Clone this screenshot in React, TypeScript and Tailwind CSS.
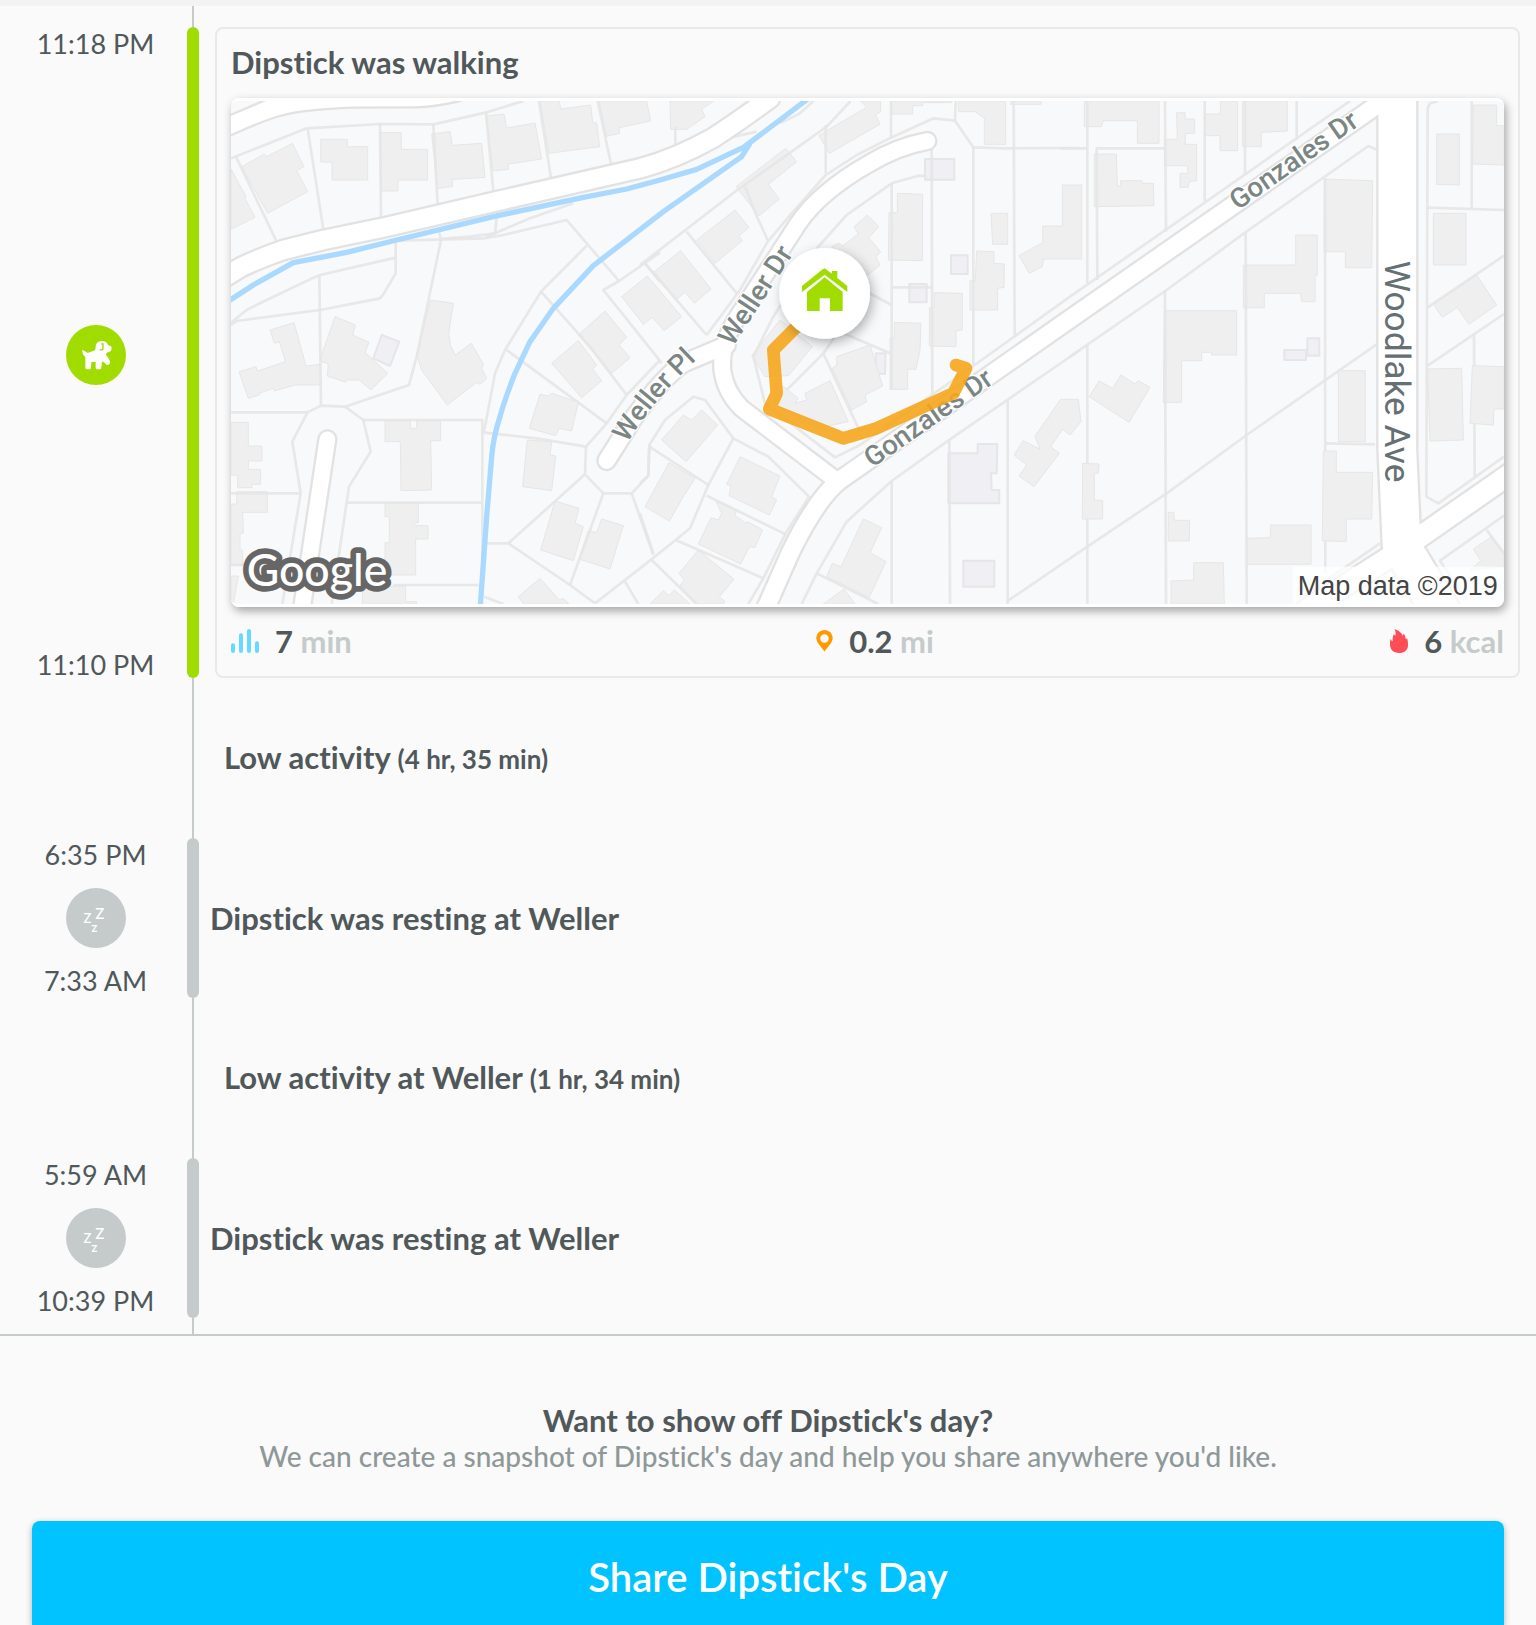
import type { ReactNode } from "react";

/* ---------- map data: [x, y] pairs, grouped by tile ---------- */

type Tile = { x: number; y: number; lots: string[]; houses: string[]; pools: string[] };

const tiles: Tile[] = [
  {
    x: 0,
    y: 0,
    lots: [
      "33,205 260,115 480,102 640,103 800,67 910,33",
      "48,200 170,455",
      "263,115 310,418",
      "480,102 483,383",
      "640,103 653,345",
      "798,67 820,303",
      "957,33 993,265",
      "1133,33 1173,222",
      "33,698 80,660 140,630 270,568 300,555 527,503",
      "527,455 527,550 490,613 480,625 300,660 50,693 33,705",
      "298,555 303,945",
      "530,452 790,445 850,435 1040,390 1197,573 1320,488",
      "660,447 750,440 825,430 830,385",
      "800,440 930,385 1060,340",
      "656,420 663,450 590,800 567,885 375,950 303,947 262,967 33,967",
      "1100,467 963,605 855,780 825,850 797,1000 790,1030",
      "963,605 1110,770 1220,915",
      "1275,520 1320,575",
      "1197,573 1150,600 1310,800 1325,820",
      "860,780 1160,1000",
    ],
    houses: [
      "65,230 133,192 140,200 217,160 252,230 230,242 263,305 143,370",
      "33,237 77,318 75,325 105,382 33,418",
      "302,148 382,148 382,170 443,170 443,270 336,270 336,216 302,216",
      "481,128 544,128 544,178 623,178 623,270 534,270 534,303 483,303",
      "635,132 690,125 697,166 785,160 795,262 697,268 697,290 652,295",
      "797,78 852,72 860,114 945,99 965,207 865,222 866,238 820,243",
      "960,33 1018,33 1022,57 1112,45 1118,97 1130,99 1139,170 987,190",
      "1137,33 1280,33 1292,93 1197,113 1199,130 1160,139",
      "150,720 222,698 258,828 300,823 300,885 225,885 163,903 160,895 117,910 118,915 85,925 57,845 108,830 112,843 197,815 178,755 163,760",
      "345,680 406,705 398,735 447,757 435,787 503,850 453,900 418,870 378,870 378,877 322,858 325,822 305,815 303,800",
      "632,630 700,640 686,730 692,768 706,795 754,760 790,823 785,835 800,865 780,883 770,877 682,945 605,840 590,795",
      "1155,663 1220,742 1197,765 1230,803 1175,850 1075,735",
      "995,820 1075,752 1130,825 1118,838 1145,872 1085,923",
    ],
    pools: ["485,735 538,755 510,828 460,805"],
  },
  {
    x: 1260,
    y: 0,
    lots: [
      "0,525 288,303 560,110 632,33",
      "140,425 290,610",
      "15,520 200,735",
      "557,105 557,250",
      "315,290 350,378 383,450",
      "753,33 753,143 880,85 945,92 1000,172 1100,175 1320,174",
      "947,33 945,92",
      "875,180 877,915",
      "1000,172 1000,825",
      "1121,33 1124,740",
      "200,735 300,600 383,455 455,370 557,255 650,195 753,143",
      "855,258 835,257 755,280 620,375 535,470 400,680 340,800 375,940 585,1102 660,1065 875,915 1000,828 1290,620",
      "755,280 755,900",
      "755,592 877,592",
      "670,600 755,645",
      "600,725 750,790",
      "585,740 550,790 430,910",
      "550,790 660,1025",
      "106,110 106,172",
      "390,105 430,95 480,70 520,33",
      "260,145 350,125",
    ],
    houses: [
      "-55,620 22,558 125,680 72,722 37,682 10,703",
      "43,545 122,482 213,597 163,640 135,607 110,628",
      "90,33 220,33 185,58 195,80 140,118 92,118",
      "288,290 437,175 470,215 385,283 418,327 357,378",
      "170,450 285,360 327,412 297,437 307,452 225,520",
      "537,137 560,122 680,52 662,33 722,33 722,65 707,75 720,103 568,190",
      "753,33 935,33 935,38 848,38 848,47 818,47 818,72 753,72",
      "955,33 1097,33 1097,163 1033,163 1033,85 1005,65 955,65",
      "1112,33 1203,33 1203,43 1112,43",
      "772,310 848,313 847,512 745,510 747,368 772,368",
      "642,410 682,375 716,410 686,443 722,485 708,502 720,525 680,558 600,500 575,470 597,460 607,468 655,432",
      "1053,370 1103,370 1103,463 1058,463",
      "1010,483 1062,485 1062,520 1093,522 1092,592 1073,595 1073,660 990,660 990,572 1006,572",
      "883,608 967,610 967,720 948,722 948,770 868,768 868,653 883,653",
      "763,697 843,700 840,780 828,838 803,838 803,898 750,898 750,745 763,745",
      "1267,285 1325,285 1325,507 1210,507 1207,530 1168,550 1137,497 1208,458 1208,408 1267,408",
      "335,797 420,690 517,770 445,857 375,860",
    ],
    pools: [
      "855,207 943,207 943,269 855,269",
      "933,496 983,496 983,552 933,552",
      "808,582 860,582 860,637 808,637",
      "707,790 737,790 735,852 707,850",
    ],
  },
  {
    x: 2550,
    y: 0,
    lots: [
      "0,620 840,33",
      "0,800 290,600 525,428 895,168 922,180",
      "52,33 52,580",
      "52,765 52,1542",
      "82,570 80,175 283,175",
      "-30,175 52,175",
      "285,33 288,425",
      "285,600 288,1542",
      "404,33 404,335",
      "525,33 525,255",
      "527,428 530,1542",
      "680,33 680,150",
      "765,265 766,1450",
      "1205,33 1205,355",
      "1073,353 1302,360",
      "1105,33 1080,40 1073,55 1069,1220 1105,1240 1302,1100",
      "1073,652 1302,497",
      "1073,827 1302,672",
      "1212,735 1214,1160",
    ],
    houses: [
      "43,33 267,33 267,160 202,160 202,92 100,92 95,110 43,110",
      "73,192 139,192 142,288 152,288 152,272 215,272 217,280 250,280 252,347 73,350",
      "320,68 345,68 345,87 374,87 374,130 346,130 346,163 380,163 380,272 357,275 355,292 330,292 330,250 354,250 352,227 283,227 283,148 322,148",
      "452,33 503,33 503,182 450,182 450,137 405,137 405,72 450,72",
      "517,33 652,33 652,123 574,127 574,170 517,170",
      "763,267 908,272 905,533 826,533 826,485 762,485",
      "1100,132 1168,132 1168,285 1100,283",
      "1210,45 1280,45 1280,107 1302,107 1302,225 1208,222",
      "1090,370 1188,370 1188,525 1090,525",
      "1090,642 1220,555 1280,645 1197,703 1162,652 1117,682",
      "677,435 742,435 742,555 735,558 735,635 695,635 692,610 583,610 583,653 520,653 520,525 677,525",
      "283,662 500,662 500,795 425,795 425,787 395,787 395,812 335,812 335,937 280,937",
    ],
    pools: ["712,745 748,745 748,797 712,797", "643,780 708,780 708,810 643,810"],
  },
  {
    x: 0,
    y: 780,
    lots: [
      "793,248 950,265 1098,290 1160,220 1220,135 1320,30",
      "1098,290 1095,373 1150,430 1235,430 1285,377 1288,285",
      "1095,373 865,580 800,580",
      "865,580 1050,705 1125,760 1260,655",
      "1150,430 1050,705",
      "1235,430 1300,615",
      "1215,695 1255,762",
      "793,740 850,762",
      "262,188 217,275 242,430 187,762",
      "33,430 242,430",
      "375,170 430,210 452,305 387,410 335,762",
      "430,210 787,210 787,700",
      "383,458 783,458",
      "520,705 775,705",
      "33,645 90,645",
    ],
    houses: [
      "33,217 85,217 85,288 126,288 126,333 85,333 85,358 122,358 122,403 96,403 96,413 53,413 53,375 33,375",
      "50,425 142,425 142,487 68,487 70,550 60,550 60,600 68,602 68,645 33,645 33,462 50,462",
      "33,678 55,678 40,762 33,762",
      "495,212 572,212 572,235 590,235 590,212 662,212 662,272 632,272 635,420 543,422 541,275 495,275",
      "495,460 595,460 595,517 583,520 583,527 624,527 624,567 587,567 587,675 495,675 495,578 508,578 508,500 495,500",
      "427,708 557,708 557,755 590,755 590,762 427,762",
      "960,133 985,138 995,130 1075,157 1055,243 1017,235 1007,257 928,235",
      "922,270 995,275 990,315 1007,318 995,422 908,410",
      "1005,453 1077,475 1065,520 1090,530 1060,632 962,600",
      "1145,507 1210,527 1170,657 1077,627 1105,542 1130,548",
      "895,740 960,685 1018,750 1030,745 1048,762 910,762",
    ],
    pools: [],
  },
  {
    x: 1260,
    y: 780,
    lots: [
      "0,400 25,377 28,285 75,210 160,140 195,150 280,265 385,320 507,440 437,550 370,685 325,762",
      "0,655 107,570 150,535 205,405 280,265",
      "28,290 205,405",
      "200,437 437,553",
      "107,570 370,685",
      "0,490 40,610",
      "35,630 170,762",
      "485,762 530,670 620,515 755,393 930,268 1320,0",
      "755,393 755,762",
      "530,670 715,762",
      "928,268 930,762",
      "1103,150 1103,762",
      "1100,755 1320,605 1580,430 1820,255 2210,-17",
    ],
    houses: [
      "590,20 690,-15 728,108 675,135 680,155 635,180 577,55 590,45",
      "430,110 475,145 465,160 500,150 495,130 570,92 625,215 530,235 400,160",
      "65,270 130,195 155,210 185,180 233,225 138,335",
      "87,338 165,385 133,435 88,513 15,470",
      "300,320 420,378 395,440 410,450 388,495 267,437 273,407 260,403",
      "228,455 290,480 285,497 318,520 323,515 368,540 345,592 328,590 302,642 175,582 213,503 235,510 245,490",
      "175,600 282,688 238,740 255,755 250,762 165,762 120,705 133,690 117,670",
      "30,762 70,722 87,737 103,720 150,762",
      "670,507 725,533 690,608 738,635 687,743 560,680 577,640 603,650",
      "550,762 612,717 645,762",
      "1262,148 1315,148 1323,215 1290,255 1268,238 1232,290 1258,310 1182,410 1137,378 1160,345 1122,315 1150,272 1200,298 1185,258",
    ],
    pools: [
      "925,310 1013,310 1013,282 1072,282 1070,370 1053,370 1055,420 1078,420 1078,460 925,460",
      "970,632 1063,632 1063,710 970,710",
    ],
  },
  {
    x: 2550,
    y: 780,
    lots: [
      "766,280 915,283",
      "1302,497 1110,632 1190,750",
      "1250,540 1302,610",
      "690,745 930,580",
    ],
    houses: [
      "58,140 87,93 128,115 153,75 195,102 205,92 240,112 177,217",
      "38,340 87,342 85,370 73,370 73,450 98,452 98,507 37,507",
      "805,62 886,62 886,275 805,275",
      "760,303 799,303 799,367 908,367 905,507 829,507 829,575 757,572",
      "601,525 723,525 723,643 532,643 532,565 601,563",
      "295,487 311,487 313,511 359,511 358,573 295,573",
      "371,638 460,638 463,762 303,762 303,693 371,690",
      "1073,57 1175,55 1180,270 1080,273",
      "1207,47 1302,50 1302,177 1272,177 1270,225 1200,220",
      "1210,597 1265,560 1302,615 1302,650 1200,660 1232,632",
    ],
    pools: [],
  },
];

type Road = { d: string; w: number };

const roads: Road[] = [
  { d: "M20 558 L60 533 Q110 508 190 480 L310 450 L480 415 L820 336 L1260 235 Q1370 205 1480 143 Q1550 98 1650 25", w: 60 },
  { d: "M2122 153 Q2030 170 1945 222 Q1800 305 1735 400 Q1680 485 1560 670 Q1500 760 1507 840 Q1515 905 1565 955 L1850 1172", w: 52 },
  { d: "M1160 1112 L1240 985 Q1330 860 1390 820 L1520 765", w: 54 },
  { d: "M3510 18 L2550 687 L1860 1170 Q1790 1225 1710 1390 L1635 1560", w: 56 },
  { d: "M3532 20 V1080 L3545 1370 L3660 1560", w: 118 },
  { d: "M3870 1152 L3550 1375 L3260 1560", w: 66 },
  { d: "M322 1048 L245 1560", w: 52 },
];

const routePath =
  "M1800 630 L1725 715 L1660 780 L1670 910 L1648 957 L1870 1045 L1970 1015 L2200 910 L2238 835 L2208 825";

const streetName = "font-['Roboto',sans-serif] text-[83px] font-medium";

function WalkMap() {
  return (
    <svg
      viewBox="33 33 3819 1509"
      preserveAspectRatio="xMidYMid slice"
      className="block w-full"
      role="img"
      aria-label="Map of the walk near Weller Dr and Gonzales Dr"
    >
      <defs>
        <filter id="pin-shadow" x="-30%" y="-30%" width="160%" height="160%">
          <feDropShadow dx="8" dy="12" stdDeviation="18" floodColor="#000" floodOpacity="0.3" />
        </filter>
        <path id="weller-pl" d="M1222 1060 Q1295 935 1440 800" />
      </defs>
      <rect x="33" y="33" width="3819" height="1509" fill="#f8f9fb" />

      {tiles.map((t) => (
        <g key={`${t.x}-${t.y}`} transform={`translate(${t.x} ${t.y})`} strokeLinejoin="round">
          {t.houses.map((p) => (
            <polygon key={p} points={p} fill="#efefef" stroke="#e6e6e6" strokeWidth="3" />
          ))}
          {t.pools.map((p) => (
            <polygon key={p} points={p} fill="#efeff4" stroke="#e6e6e8" strokeWidth="6" />
          ))}
          {t.lots.map((p) => (
            <polyline key={p} points={p} fill="none" stroke="#e5e5e5" strokeOpacity="0.9" strokeWidth="8" />
          ))}
        </g>
      ))}

      <path
        d="M20 80 L90 50 L160 20 H760 L720 33 Q640 52 585 52 L400 53 Q250 58 180 78 Q120 95 20 142 Z"
        fill="#fff"
        stroke="#e2e2e2"
        strokeWidth="7"
      />

      <g fill="none" strokeLinecap="round" strokeLinejoin="round">
        {roads.map((r) => (
          <path key={r.d} d={r.d} stroke="#e2e2e2" strokeWidth={r.w + 9} />
        ))}
        {roads.map((r) => (
          <path key={r.d} d={r.d} stroke="#fff" strokeWidth={r.w - 5} />
        ))}
      </g>

      <g fill="none" stroke="#a9d9ff" strokeWidth="16" strokeLinejoin="round">
        <path d="M20 637 L100 585 L220 518 L380 487 L530 450 L820 380 L1090 322 L1220 297 L1320 270 L1430 238 L1570 172 L1600 150 L1770 22" />
        <path d="M1590 160 L1565 200 L1330 365 L1120 527 L1000 655 L930 755 L885 850 Q850 940 840 980 Q820 1040 815 1100 L800 1280 L790 1420 L780 1560" />
      </g>

      <g fill="#7b8684" stroke="#fff" strokeWidth="8" strokeLinejoin="round" paintOrder="stroke">
        <text transform="translate(1538 772) rotate(-57)" className={streetName}>
          Weller Dr
        </text>
        <text className={streetName}>
          <textPath href="#weller-pl">Weller Pl</textPath>
        </text>
        <text transform="translate(3053 362) rotate(-35)" className={streetName}>
          Gonzales Dr
        </text>
        <text transform="translate(1957 1135) rotate(-35)" className={streetName}>
          Gonzales Dr
        </text>
        <text
          transform="translate(3495 512) rotate(90)"
          fill="#647073"
          className="font-['Roboto',sans-serif] text-[106px]"
        >
          Woodlake Ave
        </text>
      </g>

      <path
        d={routePath}
        fill="none"
        stroke="#f5a61c"
        strokeOpacity="0.9"
        strokeWidth="38"
        strokeLinecap="round"
        strokeLinejoin="round"
      />

      <circle cx="1814" cy="610" r="136" fill="#fff" filter="url(#pin-shadow)" />
      <g fill="#a0dc00">
        <path d="M1746 588 L1808 538 L1814 535 L1836 551 V543 H1852 V564 L1882 588 V606 L1814 554 L1746 606 Z" />
        <path d="M1761 606 L1814 562 L1868 606 V663 H1830 V625 H1799 V663 H1761 Z" />
      </g>

      <text
        x="80"
        y="1488"
        fill="#fff"
        stroke="#666"
        strokeWidth="34"
        strokeLinejoin="round"
        paintOrder="stroke"
        className="font-['Lato',sans-serif] text-[134px] font-medium"
      >
        Google
      </text>

      <rect x="3218" y="1430" width="634" height="112" fill="#fff" fillOpacity="0.72" />
      <text x="3233" y="1515" fill="#444" className="font-['Liberation_Sans',sans-serif] text-[81px]">
        Map data ©2019
      </text>
    </svg>
  );
}

function DogIcon() {
  return (
    <svg viewBox="48 45 180 180" className="size-15" aria-hidden="true">
      <path
        fill="#fff"
        d="M96 120 Q104 121 113 129 L135 121 Q137 117 137 108 Q139 94 154 93 Q168 91 174 104 Q176 108 183 108 Q188 115 183 122 Q178 126 170 128 L168 134 Q178 146 180 154 Q181 163 174 165 Q168 166 165 159 L156 154 L154 174 Q154 178 148 178 H142 Q137 178 137 173 V156 H124 L123 173 Q123 178 117 178 H111 Q106 178 106 172 V142 Q96 132 96 120 Z"
      />
      <path fill="none" stroke="#a0dc00" strokeWidth="4" d="M154 102 H159 V116 Q158 121 149 119" />
    </svg>
  );
}

function SleepIcon() {
  return (
    <svg viewBox="198 204 180 180" className="size-15 font-['Inter',sans-serif]" aria-hidden="true" fill="#fff">
      <text x="285" y="297" className="text-[45px] font-medium">Z</text>
      <text x="250" y="310" className="text-[39px] font-medium">Z</text>
      <text x="274" y="336" className="text-[28px] font-bold">Z</text>
    </svg>
  );
}

function BarsIcon() {
  return (
    <svg viewBox="0 0 84 72" className="h-6 w-7" fill="#66d9ff" aria-hidden="true">
      <rect x="0" y="43" width="12" height="29" rx="6" />
      <rect x="24" y="13" width="12" height="59" rx="6" />
      <rect x="48" y="0" width="12" height="72" rx="6" />
      <rect x="72" y="37" width="12" height="35" rx="6" />
    </svg>
  );
}

function PinIcon() {
  return (
    <svg viewBox="0 0 52 72" className="h-6 w-[17px]" aria-hidden="true">
      <path
        fill="#f90"
        fillRule="evenodd"
        d="M26 2 C40 2 51 13 51 27 C51 42 34 56 26 69 C18 56 1 42 1 27 C1 13 12 2 26 2 Z M26 15 A13 13 0 1 0 26 41 A13 13 0 1 0 26 15 Z"
      />
    </svg>
  );
}

function FlameIcon() {
  return (
    <svg viewBox="0 0 54 72" className="h-6 w-[18px]" aria-hidden="true">
      <path
        fill="#ff4d55"
        d="M13 0 C22 3 34 9 38 20 C40 18 41 15 40 13 C46 19 46 26 48 31 C50 30 51 28 51 26 C54 35 54 45 54 50 C53 64 42 72 27 72 C11 72 0 63 0 46 C0 41 0 35 2 30 C4 33 5 36 8 37 C8 28 8 21 12 15 C13 18 14 19 16 20 C18 13 17 6 13 0 Z"
      />
    </svg>
  );
}

function Stat({ icon, value, unit }: { icon: ReactNode; value: string; unit: string }) {
  return (
    <div className="flex items-center">
      {icon}
      <span className="ml-4 text-[31px] leading-9 font-bold">
        {value} <span className="text-[#c5cbcb]">{unit}</span>
      </span>
    </div>
  );
}

type EntryProps = {
  start: string;
  end: string;
  tone: "walk" | "rest";
  children: ReactNode;
};

function Entry({ start, end, tone, children }: EntryProps) {
  const walk = tone === "walk";
  return (
    <li className="flex min-h-40">
      <div className="flex w-[187px] shrink-0 flex-col items-center justify-between pl-1 text-[27px] leading-[34px]">
        <time>{start}</time>
        <span className={walk ? "rounded-full bg-[#a0dc00]" : "rounded-full bg-[#c5cbcb]"}>
          {walk ? <DogIcon /> : <SleepIcon />}
        </span>
        <time className={walk ? "-mb-1" : ""}>{end}</time>
      </div>
      <div className={walk ? "w-3 shrink-0 rounded-full bg-[#a0dc00]" : "w-3 shrink-0 rounded-full bg-[#c5cbcb]"} />
      {children}
    </li>
  );
}

function Spine({ className }: { className: string }) {
  return (
    <div className={`flex ${className}`} aria-hidden="true">
      <div className="ml-48 w-0.5 bg-[#c5cbcb]" />
    </div>
  );
}

function LowActivity({ label, duration }: { label: string; duration: string }) {
  return (
    <li className="flex h-40 items-center">
      <div className="ml-48 w-0.5 self-stretch bg-[#c5cbcb]" />
      <p className="ml-[30px] text-[31px] leading-9 font-bold">
        {label} <span className="text-[26px]">({duration})</span>
      </p>
    </li>
  );
}

function Resting({ place }: { place: string }) {
  return <h2 className="ml-[11px] self-center text-[31px] leading-9 font-bold">Dipstick was resting at {place}</h2>;
}

export default function App() {
  return (
    <main className="min-h-screen overflow-hidden border-t-6 border-[#f3f3f3] bg-[#fafafa] font-['Lato',sans-serif] text-[#50585a] [font-variant-ligatures:none]">
      <section className="border-b-2 border-[#c5cbcb]">
        <Spine className="h-[21px]" />
        <ol>
          <Entry start="11:18 PM" end="11:10 PM" tone="walk">
            <article className="mr-4 ml-4 min-w-0 flex-1 rounded-lg border-2 border-[#e6eaea] px-3.5 pt-[15px] pb-[17px]">
              <h2 className="text-[31px] leading-9 font-bold">Dipstick was walking</h2>
              <div className="mt-[18px] overflow-hidden rounded-lg border-y-3 border-white shadow-[2px_4px_10px_rgba(0,0,0,0.35)]">
                <WalkMap />
              </div>
              <div className="mt-4 flex justify-between">
                <Stat icon={<BarsIcon />} value="7" unit="min" />
                <div className="pl-2">
                  <Stat icon={<PinIcon />} value="0.2" unit="mi" />
                </div>
                <Stat icon={<FlameIcon />} value="6" unit="kcal" />
              </div>
            </article>
          </Entry>
          <LowActivity label="Low activity" duration="4 hr, 35 min" />
          <Entry start="6:35 PM" end="7:33 AM" tone="rest">
            <Resting place="Weller" />
          </Entry>
          <LowActivity label="Low activity at Weller" duration="1 hr, 34 min" />
          <Entry start="5:59 AM" end="10:39 PM" tone="rest">
            <Resting place="Weller" />
          </Entry>
        </ol>
        <Spine className="h-4" />
      </section>

      <section className="px-8 pt-[66px] text-center">
        <h2 className="text-[31px] leading-9 font-bold">Want to show off Dipstick's day?</h2>
        <p className="text-[28px] leading-9 font-medium text-[#8f9898]">
          We can create a snapshot of Dipstick's day and help you share anywhere you'd like.
        </p>
        <button
          type="button"
          className="mt-[47px] block h-26 w-full rounded-t-lg bg-[#00c3ff] pt-2 text-[40px] leading-none font-semibold text-white shadow-[0_2px_6px_rgba(0,0,0,0.3)]"
        >
          Share Dipstick's Day
        </button>
      </section>
    </main>
  );
}
